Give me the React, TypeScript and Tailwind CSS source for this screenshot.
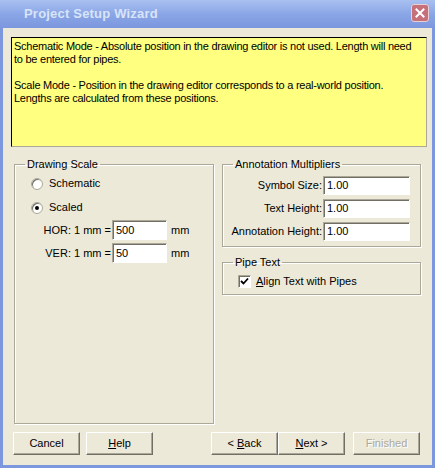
import React from "react";

const font = { fontFamily: '"Liberation Sans", Arial, sans-serif' };

function Field({ value, width, height }: { value: string; width: string; height: string }) {
  return (
    <div
      className={`${width} ${height} bg-white border border-t-[#ACA899] border-l-[#ACA899] border-r-white border-b-white shadow-[inset_1px_1px_0_#716F64] pl-[3px] flex items-center text-[11px] text-black`}
    >
      {value}
    </div>
  );
}

function WinButton({ children, disabled }: { children: React.ReactNode; disabled?: boolean }) {
  return (
    <button
      className={`w-[67px] h-[23px] bg-[#ECE9D8] border border-t-white border-l-white border-r-[#716F64] border-b-[#716F64] shadow-[inset_-1px_-1px_0_#ACA899] text-[11px] flex items-center justify-center ${
        disabled ? "text-[#ACA899] [text-shadow:1px_1px_0_#fff]" : "text-black"
      }`}
    >
      {children}
    </button>
  );
}

function Radio({ checked, label }: { checked?: boolean; label: string }) {
  return (
    <div className="flex items-center h-[13px]">
      <div className="w-[12px] h-[12px] rounded-full bg-white border border-[#ACA899] shadow-[inset_1px_1px_0_#716F64] ml-[16px] flex items-center justify-center">
        {checked && <div className="w-[4px] h-[4px] rounded-full bg-black" />}
      </div>
      <span className="ml-[6px] text-[11px]">{label}</span>
    </div>
  );
}

export default function App() {
  return (
    <div className="w-[435px] h-[468px] bg-[#7C97DE] flex flex-col text-black" style={font}>
      {/* Title bar */}
      <div className="h-[28px] bg-gradient-to-b from-[#A9C0F0] via-[#8AA6E6] to-[#7C97DE] flex items-center pl-[24px] pr-[6px]">
        <span className="text-[13px] font-bold text-[#D8E4F8] tracking-[0.2px]">Project Setup Wizard</span>
        <div className="ml-auto w-[18px] h-[18px] mb-[2px] rounded-[3px] border border-[#E8D0D4] bg-[#C6707A] flex items-center justify-center">
          <svg width="10" height="10" viewBox="0 0 10 10">
            <path d="M1.5 1.5 L8.5 8.5 M8.5 1.5 L1.5 8.5" stroke="#fff" strokeWidth="2" strokeLinecap="square" />
          </svg>
        </div>
      </div>

      {/* Client area */}
      <div className="flex-1 mx-[3px] mb-[3px] bg-[#ECE9D8] flex flex-col">
        {/* Info box */}
        <div className="mt-[9px] ml-[8px] w-[416px] h-[110px] bg-[#FFFF80] border border-t-[#000] border-l-[#000] border-r-[#ACA899] border-b-[#ACA899] px-[2px] pt-[2px] text-[11px] leading-[13px] tracking-[-0.25px] whitespace-nowrap">
          <p>
            Schematic Mode - Absolute position in the drawing editor is not used. Length will need
            <br />
            to be entered for pipes.
          </p>
          <p className="mt-[13px]">
            Scale Mode - Position in the drawing editor corresponds to a real-world position.
            <br />
            Lengths are calculated from these positions.
          </p>
        </div>

        <div className="mt-[11px] flex">
          {/* Drawing Scale */}
          <fieldset className="ml-[11px] w-[200px] h-[266px] border border-[#ACA899] shadow-[inset_1px_1px_0_#fff,1px_1px_0_#fff]">
            <legend className="ml-[10px] px-[2px] text-[11px] leading-[13px]">Drawing Scale</legend>
            <div className="mt-[6px]">
              <Radio label="Schematic" />
            </div>
            <div className="mt-[11px]">
              <Radio checked label="Scaled" />
            </div>
            <div className="mt-[6px] flex items-center">
              <span className="w-[97px] text-right text-[11px] pr-[1px]">HOR: 1 mm =</span>
              <Field value="500" width="w-[55px]" height="h-[20px]" />
              <span className="ml-[4px] text-[11px]">mm</span>
            </div>
            <div className="mt-[3px] flex items-center">
              <span className="w-[97px] text-right text-[11px] pr-[1px]">VER: 1 mm =</span>
              <Field value="50" width="w-[55px]" height="h-[20px]" />
              <span className="ml-[4px] text-[11px]">mm</span>
            </div>
          </fieldset>

          <div className="ml-[8px] w-[199px] flex flex-col">
            {/* Annotation Multipliers */}
            <fieldset className="h-[89px] border border-[#ACA899] shadow-[inset_1px_1px_0_#fff,1px_1px_0_#fff]">
              <legend className="ml-[10px] px-[2px] text-[11px] leading-[13px]">Annotation Multipliers</legend>
              <div className="mt-[5px] flex flex-col gap-[4px]">
                {[
                  ["Symbol Size:", "1.00"],
                  ["Text Height:", "1.00"],
                  ["Annotation Height:", "1.00"],
                ].map(([label, value]) => (
                  <div key={label} className="flex items-center">
                    <span className="w-[100px] text-right text-[11px] pr-[1px]">{label}</span>
                    <Field value={value} width="w-[87px]" height="h-[19px]" />
                  </div>
                ))}
              </div>
            </fieldset>

            {/* Pipe Text */}
            <fieldset className="mt-[9px] h-[39px] border border-[#ACA899] shadow-[inset_1px_1px_0_#fff,1px_1px_0_#fff]">
              <legend className="ml-[10px] px-[2px] text-[11px] leading-[13px]">Pipe Text</legend>
              <div className="mt-[6px] flex items-center h-[13px]">
                <div className="ml-[15px] w-[13px] h-[13px] bg-white border border-t-[#ACA899] border-l-[#ACA899] border-r-white border-b-white shadow-[inset_1px_1px_0_#716F64] flex items-center justify-center">
                  <svg width="9" height="9" viewBox="0 0 9 9">
                    <path d="M1 4 L3.5 6.5 L8 1.5" stroke="#000" strokeWidth="1.8" fill="none" />
                  </svg>
                </div>
                <span className="ml-[5px] text-[11px]">
                  <span className="underline">A</span>lign Text with Pipes
                </span>
              </div>
            </fieldset>
          </div>
        </div>

        {/* Buttons */}
        <div className="mt-[8px] flex pl-[10px]">
          <WinButton>Cancel</WinButton>
          <div className="ml-[6px]">
            <WinButton>
              <span className="underline">H</span>elp
            </WinButton>
          </div>
          <div className="ml-[58px] flex">
            <WinButton>
              &lt;&nbsp;<span className="underline">B</span>ack
            </WinButton>
            <WinButton>
              <span className="underline">N</span>ext &gt;
            </WinButton>
          </div>
          <div className="ml-[8px]">
            <WinButton disabled>Finished</WinButton>
          </div>
        </div>
      </div>
    </div>
  );
}
